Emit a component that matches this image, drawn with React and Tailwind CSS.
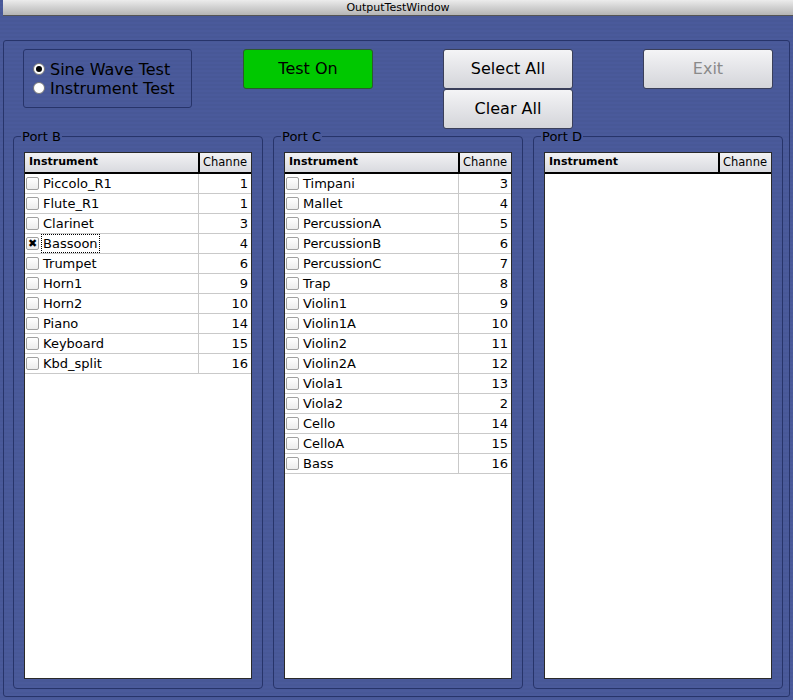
import React from "react";

const portB = [
  ["Piccolo_R1", 1],
  ["Flute_R1", 1],
  ["Clarinet", 3],
  ["Bassoon", 4, true],
  ["Trumpet", 6],
  ["Horn1", 9],
  ["Horn2", 10],
  ["Piano", 14],
  ["Keyboard", 15],
  ["Kbd_split", 16],
];

const portC = [
  ["Timpani", 3],
  ["Mallet", 4],
  ["PercussionA", 5],
  ["PercussionB", 6],
  ["PercussionC", 7],
  ["Trap", 8],
  ["Violin1", 9],
  ["Violin1A", 10],
  ["Violin2", 11],
  ["Violin2A", 12],
  ["Viola1", 13],
  ["Viola2", 2],
  ["Cello", 14],
  ["CelloA", 15],
  ["Bass", 16],
];

function MacButton({ children, disabled, className = "" }) {
  return (
    <div
      className={
        "w-[130px] h-[40px] flex items-center justify-center rounded-[3px] border border-[#3a3f5a] bg-gradient-to-b from-[#f4f4f6] to-[#d4d5da] text-[16px] " +
        (disabled ? "text-[#8a8a8a] " : "text-black ") +
        className
      }
    >
      {children}
    </div>
  );
}

function Port({ name, rows }) {
  return (
    <fieldset className="w-[250px] h-[559px] border border-[#27346a] rounded-[4px] pl-[10px] pr-[10px] pb-[9px]">
      <legend className="-ml-[3px] px-[1px] text-[13px] leading-[13px] text-black">{name}</legend>
      <div className="mt-[9px] h-[527px] bg-white border border-[#2a2a2a] flex flex-col">
        <div className="flex h-[21px] border-b-2 border-black bg-gradient-to-b from-[#f2f2f4] to-[#d9dadf] text-[11px]">
          <div className="flex-1 pl-[4px] flex items-center font-bold">Instrument</div>
          <div className="w-[53px] border-l-2 border-black pl-[3px] flex items-center text-[11.5px]">Channe</div>
        </div>
        {rows.map(([inst, ch, checked]) => (
          <div key={inst} className="flex h-[20px] border-b border-[#c9c9c9] text-[13px]">
            <div className="flex-1 flex items-center pl-[1px]">
              <span className="w-[13px] h-[13px] border border-[#a0a0a0] rounded-[2px] bg-gradient-to-b from-white to-[#ececec] flex items-center justify-center text-[11px] leading-none">
                {checked ? "✖" : ""}
              </span>
              <span
                className={
                  "ml-[3px] px-[1px] leading-[17px] " +
                  (checked ? "outline outline-1 outline-dotted outline-black" : "")
                }
              >
                {inst}
              </span>
            </div>
            <div className="w-[53px] border-l border-[#c9c9c9] pr-[3px] flex items-center justify-end">{ch}</div>
          </div>
        ))}
      </div>
    </fieldset>
  );
}

export default function App() {
  return (
    <div
      className="w-[793px] h-[700px] flex flex-col bg-[#4a5a9b] bg-[repeating-linear-gradient(0deg,#4a5a9b_0px,#4a5a9b_2px,#485897_2px,#485897_4px)] pl-[3px] text-black"
      style={{ fontFamily: '"Lucida Grande", "DejaVu Sans", sans-serif' }}
    >
      <div className="h-[16px] bg-gradient-to-b from-[#ececec] to-[#b5b5b5] border-b border-[#555] flex items-center justify-center text-[11px] leading-none">
        OutputTestWindow
      </div>
      <div className="mt-[24px] w-[787px] h-[657px] border border-[#27346a] rounded-[3px] flex flex-col">
        <div className="flex pt-[8px] pl-[19px] h-[89px]">
          <div className="w-[169px] h-[59px] border border-[#27346a] rounded-[3px] flex flex-col justify-center pl-[9px] text-[16px] leading-[19px]">
            <div className="flex items-center">
              <span className="w-[12px] h-[12px] rounded-full bg-white border border-[#777] flex items-center justify-center">
                <span className="w-[6px] h-[6px] rounded-full bg-black" />
              </span>
              <span className="ml-[5px]">Sine Wave Test</span>
            </div>
            <div className="flex items-center">
              <span className="w-[12px] h-[12px] rounded-full bg-white border border-[#777]" />
              <span className="ml-[5px]">Instrument Test</span>
            </div>
          </div>
          <div className="ml-[51px] w-[130px] h-[40px] flex items-center justify-center rounded-[3px] border border-[#2c5a2c] bg-[#00c800] text-[16px]">
            Test On
          </div>
          <div className="ml-[70px] flex flex-col">
            <MacButton>Select All</MacButton>
            <MacButton>Clear All</MacButton>
          </div>
          <div className="ml-[70px]">
            <MacButton disabled>Exit</MacButton>
          </div>
        </div>
        <div className="flex gap-[10px] pl-[9px]">
          <Port name="Port B" rows={portB} />
          <Port name="Port C" rows={portC} />
          <Port name="Port D" rows={[]} />
        </div>
      </div>
    </div>
  );
}
